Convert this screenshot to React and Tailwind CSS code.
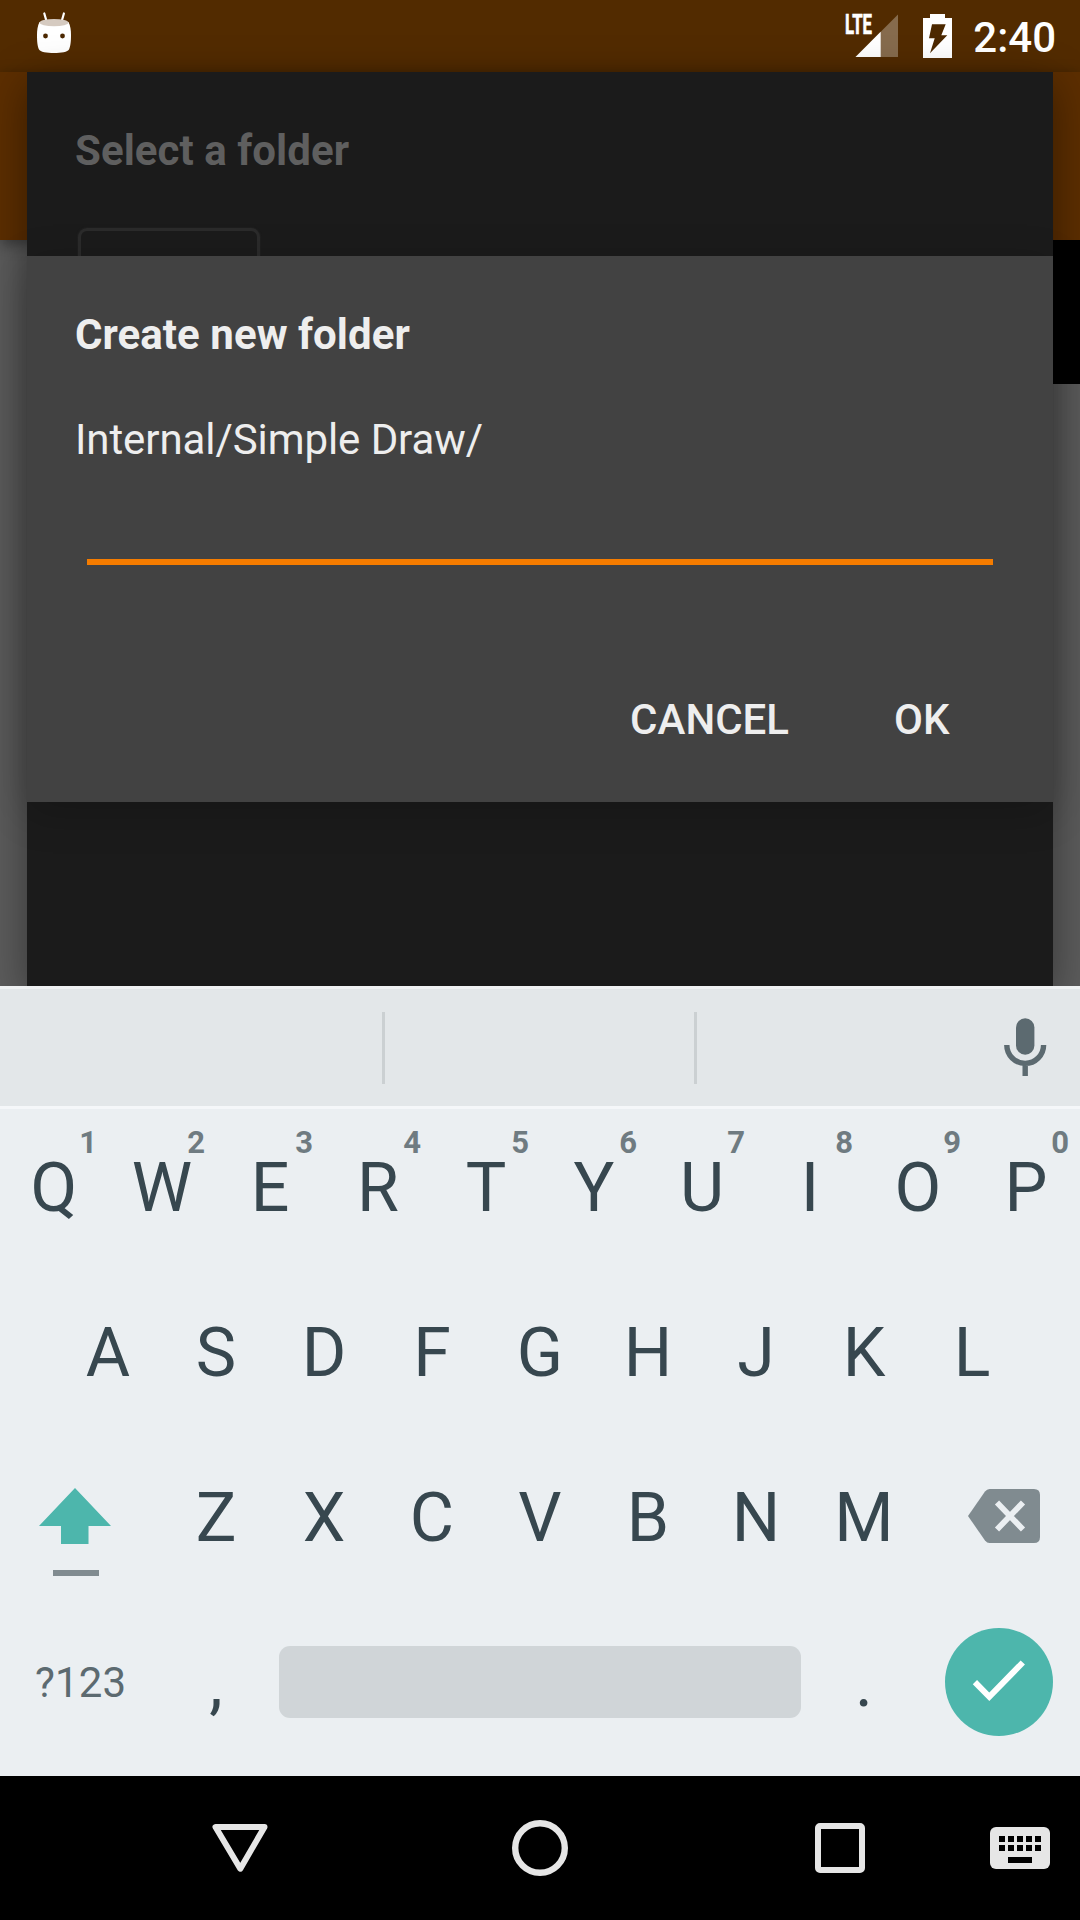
const topRow = ["Q", "W", "E", "R", "T", "Y", "U", "I", "O", "P"];
const homeRow = ["A", "S", "D", "F", "G", "H", "J", "K", "L"];
const bottomRow = ["Z", "X", "C", "V", "B", "N", "M"];
const keyColumns = [9, 18, 27, 36, 45];

function Key({ label, hint }) {
  return (
    <div className="relative flex h-[165px] w-[108px] justify-center pt-[39px]">
      <span className="text-[68px] leading-[80px] text-[#37474f]">{label}</span>
      {hint && (
        <span className="absolute top-[16px] right-[11px] text-[31px] leading-[36px] font-bold text-[#6f7b81]">
          {hint}
        </span>
      )}
    </div>
  );
}

function StatusBar() {
  return (
    <div className="flex h-[72px] items-start bg-[#522b00] text-white">
      <svg className="ml-[36px] h-[72px] w-[36px] shrink-0" viewBox="36 0 36 72">
        <path d="M44.3 13.5 46.6 21.5M63.9 13.5 61.6 21.5" stroke="#fff" strokeWidth="2.2" strokeLinecap="round" />
        <path d="M39.5 22 C37.5 26 37 30 37 35 C37 42 37.5 46 39 49.5 C40 52 47 53 54 53 C61 53 68 52 69 49.5 C70.5 46 71 42 71 35 C71 30 70.5 26 68.5 22 Z" fill="#fff" />
        <ellipse cx="54" cy="22.6" rx="14.5" ry="3.7" fill="#d5cac0" />
        <circle cx="45.5" cy="36" r="2.4" fill="#4c2800" />
        <circle cx="62.5" cy="36" r="2.4" fill="#4c2800" />
      </svg>
      <div className="mt-[9px] ml-auto w-[27px]">
        <span className="block origin-left scale-x-[0.62] text-[27px] leading-[32px] font-bold [-webkit-text-stroke:0.7px_white]">
          LTE
        </span>
      </div>
      <svg className="-ml-[17px] h-[72px] w-[44px] shrink-0" viewBox="855 0 44 72">
        <path d="M898 14.5V57H855.5Z" fill="#fff" fillOpacity=".3" />
        <path d="M880.7 31.8V57H855.5Z" fill="#fff" />
      </svg>
      <svg className="ml-[24px] h-[72px] w-[29px] shrink-0" viewBox="923 0 29 72">
        <path d="M930 14H945V18H952V58H923V18H930Z" fill="#fff" />
        <path d="M932 24.3H945.7L941.3 35.3H947.3L930 53.3L934.7 38.3H929Z" fill="#4c2800" />
      </svg>
      <span className="mt-[14px] mr-[24px] ml-[21px] text-[42px] leading-[48px] font-medium">2:40</span>
    </div>
  );
}

function CreateFolderDialog() {
  return (
    <div className="relative flex h-[546px] flex-col bg-[#424242] px-[48px] pt-[55px] text-[42px] leading-[48px] text-[#eeeeee] shadow-[0_10px_40px_rgba(0,0,0,0.2)]">
      <h2 className="font-bold tracking-[0.05px]">Create new folder</h2>
      <p className="mt-[57px] tracking-[-0.08px]">Internal/Simple Draw/</p>
      <div className="mx-[12px] mt-[95px] h-[6px] shrink-0 bg-[#f57c00]" />
      <div className="mt-[131px] flex justify-end gap-[105px] pr-[55.5px] font-medium">
        <span>CANCEL</span>
        <span>OK</span>
      </div>
    </div>
  );
}

function Keyboard() {
  return (
    <div className="relative h-[790px] bg-[#ebeff2]">
      <div className="flex h-[123px] items-start border-y-[3px] border-t-[#f0f2f3] border-b-[#f5f7f9] bg-[#e3e7e9]">
        <div className="mt-[23px] ml-[382px] h-[72px] w-[3px] bg-[#cbd0d2]" />
        <div className="mt-[23px] ml-[309px] h-[72px] w-[3px] bg-[#cbd0d2]" />
        <svg className="mt-[27px] mr-[31px] ml-auto h-[64px] w-[48px]" viewBox="1001 1016 48 64">
          <rect x="1016" y="1018.3" width="18.4" height="36.4" rx="9.2" fill="#5c6a70" />
          <path d="M1006.8 1045A18.4 18.4 0 0 0 1043.600 1045M1025.200 1063V1076" stroke="#5c6a70" strokeWidth="5.4" fill="none" />
        </svg>
      </div>
      <div className="flex">
        {topRow.map((k, i) => (
          <Key key={k} label={k} hint={String((i + 1) % 10)} />
        ))}
      </div>
      <div className="flex justify-center">
        {homeRow.map((k) => (
          <Key key={k} label={k} />
        ))}
      </div>
      <div className="flex justify-between">
        <svg className="mt-[42px] ml-[36px] h-[100px] w-[126px]" viewBox="36 1481 126 100">
          <path d="M75 1488 111 1526H88.5V1544H61V1526H39Z" fill="#4db6ac" />
          <path d="M53 1570H99V1576H53Z" fill="#808b90" />
        </svg>
        <div className="flex">
          {bottomRow.map((k) => (
            <Key key={k} label={k} />
          ))}
        </div>
        <svg className="mt-[42px] mr-[36px] h-[70px] w-[126px]" viewBox="918 1481 126 70">
          <path d="M968 1516 985 1491.5Q987 1489 989.5 1489H1034Q1040 1489 1040 1495V1537Q1040 1543 1034 1543H989.5Q987 1543 985 1540.5Z" fill="#808b90" />
          <path d="M997 1502.5 1023 1529.5M1023 1502.5 997 1529.5" stroke="#ebeff2" strokeWidth="5.8" />
        </svg>
      </div>
      <div className="flex h-[165px]">
        <span className="mt-[55px] ml-[35px] w-[127px] text-[42px] leading-[48px] tracking-[0.15px] text-[#5c6a70]">?123</span>
        <Key label="," />
        <div className="mt-[42px] ml-[9px] h-[72px] w-[522px] rounded-[11px] bg-[#d0d5d8]" />
        <div className="ml-[9px]">
          <Key label="." />
        </div>
        <div className="mt-[24px] ml-[27px] h-[108px] w-[108px] rounded-full bg-[#4db6ac]">
          <svg className="h-[108px] w-[108px]" viewBox="945 1628 108 108">
            <path d="M974.9 1682.2 989.3 1696.8 1022.8 1662.5" stroke="#fff" strokeWidth="6" fill="none" />
          </svg>
        </div>
      </div>
    </div>
  );
}

function NavigationBar() {
  return (
    <div className="flex h-[144px] items-center bg-black">
      <svg className="ml-[210px] h-[60px] w-[60px]" viewBox="210 1818 60 60" fill="none" stroke="#e6e6e6" strokeWidth="6" strokeLinejoin="round">
        <path d="M215.5 1827H264.5L240.3 1868.7Z" />
      </svg>
      <svg className="ml-[240px] h-[60px] w-[60px]" viewBox="510 1818 60 60" fill="none" stroke="#e6e6e6" strokeWidth="6.4">
        <circle cx="540" cy="1848" r="24.8" />
      </svg>
      <div className="ml-[245px] h-[50px] w-[50px] rounded-[5px] border-6 border-[#e6e6e6]" />
      <svg className="ml-[125px] h-[42px] w-[60px]" viewBox="0 0 60 42">
        <rect width="60" height="42" rx="6" fill="#e6e6e6" />
        {keyColumns.map((x) => (
          <g key={x}>
            <rect x={x} y="9" width="6" height="6" />
            <rect x={x} y="18" width="6" height="6" />
          </g>
        ))}
        <rect x="18" y="30" width="24" height="6" />
      </svg>
    </div>
  );
}

export default function App() {
  return (
    <div className="flex h-[1920px] w-[1080px] flex-col overflow-hidden bg-black font-['Roboto',sans-serif]">
      <StatusBar />
      <div className="relative h-[914px] bg-[#5c5c5c]">
        {/* Dimmed activity behind the dialogs */}
        <div className="h-[168px] bg-[#5c2e00] shadow-[0_4px_14px_rgba(0,0,0,0.4)]" />
        <div className="relative ml-auto h-[144px] w-[200px] bg-black" />
        <div className="absolute inset-x-[27px] inset-y-0 bg-[#1b1b1b] shadow-[0_12px_40px_rgba(0,0,0,0.42)]">
          <h1 className="mt-[55px] ml-[48px] h-[48px] text-[42px] leading-[48px] font-bold tracking-[0.05px] text-[#5f5f5f]">Select a folder</h1>
          <div className="mt-[53px] ml-[51px] h-[28px] w-[182px] rounded-t-[9px] border-x-3 border-t-3 border-[#2b2b2b] shadow-[0_0_2px_#2b2b2b]" />
          <CreateFolderDialog />
        </div>
      </div>
      <Keyboard />
      <NavigationBar />
    </div>
  );
}
